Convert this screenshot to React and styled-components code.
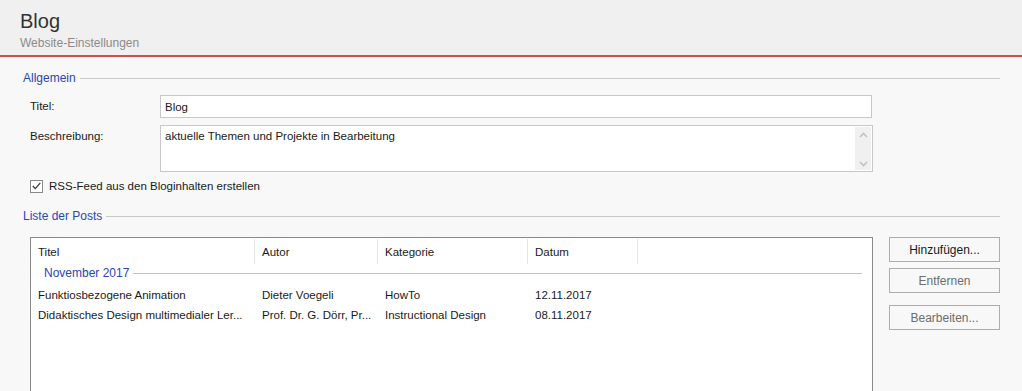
import React from 'react';
import styled, { createGlobalStyle } from 'styled-components';

const GlobalStyle = createGlobalStyle`
  html, body {
    margin: 0;
    padding: 0;
    background: #f8f8f8;
    overflow: hidden;
  }
  body {
    font-family: 'Segoe UI', 'Liberation Sans', Arial, sans-serif;
    font-size: 11.5px;
    color: #1a1a1a;
  }
`;

const Page = styled.div`
  width: 1022px;
  height: 391px;
  overflow: hidden;
`;

const Header = styled.header`
  height: 57px;
  box-sizing: border-box;
  padding: 8px 0 0 20px;
  background: #f0f0f0;
  border-bottom: 2px solid #dc4b4b;
`;

const Title = styled.h1`
  margin: 0;
  font-size: 20px;
  font-weight: normal;
  line-height: 26px;
  color: #333;
`;

const Subtitle = styled.div`
  font-size: 12px;
  line-height: 18px;
  color: #8a8a8a;
`;

const Main = styled.main`
  padding: 13px 22px 0 23px;
`;

const SectionHead = styled.div`
  display: flex;
  align-items: center;
  gap: 4px;
  height: 16px;
  font-size: 12px;
  color: #2846b4;
  margin-top: ${(p) => p.$top || 0}px;

  &::after {
    content: '';
    flex: 1;
    height: 1px;
    background: #c8c8c8;
  }
`;

const Form = styled.div`
  display: grid;
  grid-template-columns: 130px 713px;
  row-gap: 7px;
  padding: 9px 0 0 7px;
  align-items: start;
`;

const Label = styled.div`
  line-height: 23px;
`;

const TextBox = styled.input`
  box-sizing: border-box;
  height: 23px;
  width: 712px;
  margin: 0;
  padding: 0 4px;
  border: 1px solid #c8c8c8;
  background: #fff;
  font: inherit;
  color: #1a1a1a;
  outline: none;
`;

const Area = styled.div`
  box-sizing: border-box;
  height: 47px;
  width: 713px;
  display: flex;
  border: 1px solid #c8c8c8;
  background: #fff;
  padding: 1px;
`;

const AreaText = styled.div`
  flex: 1;
  padding: 0 3px;
  line-height: 18px;
`;

const ScrollBar = styled.div`
  width: 16px;
  background: #f0f0f0;
  display: flex;
  flex-direction: column;
  justify-content: space-between;
  align-items: center;
  padding: 5px 0 3px;
`;

const CheckRow = styled.label`
  display: flex;
  align-items: center;
  gap: 6px;
  margin: 6px 0 0 7px;
  height: 16px;
`;

const CheckBox = styled.span`
  box-sizing: border-box;
  width: 13px;
  height: 13px;
  border: 1px solid #8a8a8a;
  background: #fff;
  display: flex;
  align-items: center;
  justify-content: center;
`;

const ListArea = styled.div`
  display: flex;
  gap: 16px;
  margin: 13px 0 0 7px;
`;

const ListBox = styled.div`
  box-sizing: border-box;
  width: 843px;
  height: 200px;
  border: 1px solid #8a8a8a;
  background: #fff;
`;

const Columns = styled.div`
  display: grid;
  grid-template-columns: 224px 123px 150px 110px;
`;

const HeadCell = styled.div`
  height: 25px;
  margin-top: 1px;
  line-height: 27px;
  padding-left: 7px;
  border-right: 1px solid #e5e5e5;
`;

const Cell = styled.div`
  line-height: 20px;
  padding-left: 7px;
  white-space: nowrap;
`;

const Group = styled.div`
  display: flex;
  align-items: center;
  gap: 4px;
  height: 18px;
  margin: 0 10px 3px 13px;
  color: #2846b4;
  font-size: 12px;

  &::after {
    content: '';
    flex: 1;
    height: 1px;
    background: #b4c3de;
  }
`;

const Buttons = styled.div`
  display: flex;
  flex-direction: column;
`;

const Button = styled.button`
  box-sizing: border-box;
  width: 111px;
  height: 25px;
  margin: 0 0 ${(p) => p.$gap || 0}px;
  border: 1px solid #adadad;
  background: #f8f8f8;
  font: inherit;
  font-size: 12px;
  color: ${(p) => (p.disabled ? '#6d6d6d' : '#1a1a1a')};
  padding: 0;
`;

const Chevron = ({ up }) => (
  <svg width="9" height="6" viewBox="0 0 9 6">
    <path
      d={up ? 'M1 5 L4.5 1.5 L8 5' : 'M1 1 L4.5 4.5 L8 1'}
      fill="none"
      stroke="#c2c2c2"
      strokeWidth="1.6"
    />
  </svg>
);

// texts already cut like the list view shows them
const posts = [
  { titel: 'Funktiosbezogene Animation', autor: 'Dieter Voegeli', kategorie: 'HowTo', datum: '12.11.2017' },
  {
    titel: 'Didaktisches Design multimedialer Ler...',
    autor: 'Prof. Dr. G. Dörr, Pr...',
    kategorie: 'Instructional Design',
    datum: '08.11.2017',
  },
];

export default function App() {
  return (
    <Page>
      <GlobalStyle />
      <Header>
        <Title>Blog</Title>
        <Subtitle>Website-Einstellungen</Subtitle>
      </Header>
      <Main>
        <SectionHead>Allgemein</SectionHead>
        <Form>
          <Label>Titel:</Label>
          <TextBox value="Blog" readOnly />
          <Label>Beschreibung:</Label>
          <Area>
            <AreaText>aktuelle Themen und Projekte in Bearbeitung</AreaText>
            <ScrollBar>
              <Chevron up />
              <Chevron />
            </ScrollBar>
          </Area>
        </Form>
        <CheckRow>
          <CheckBox>
            <svg width="9" height="8" viewBox="0 0 9 8">
              <path d="M0.8 4 L3.3 6.6 L8.3 0.8" fill="none" stroke="#333" strokeWidth="1.2" />
            </svg>
          </CheckBox>
          RSS-Feed aus den Bloginhalten erstellen
        </CheckRow>
        <SectionHead $top={14}>Liste der Posts</SectionHead>
        <ListArea>
          <ListBox>
            <Columns>
              <HeadCell>Titel</HeadCell>
              <HeadCell>Autor</HeadCell>
              <HeadCell>Kategorie</HeadCell>
              <HeadCell>Datum</HeadCell>
            </Columns>
            <Group>November 2017</Group>
            {posts.map((p) => (
              <Columns key={p.datum}>
                <Cell>{p.titel}</Cell>
                <Cell>{p.autor}</Cell>
                <Cell>{p.kategorie}</Cell>
                <Cell>{p.datum}</Cell>
              </Columns>
            ))}
          </ListBox>
          <Buttons>
            <Button $gap={6}>Hinzufügen...</Button>
            <Button $gap={12} disabled>Entfernen</Button>
            <Button disabled>Bearbeiten...</Button>
          </Buttons>
        </ListArea>
      </Main>
    </Page>
  );
}
